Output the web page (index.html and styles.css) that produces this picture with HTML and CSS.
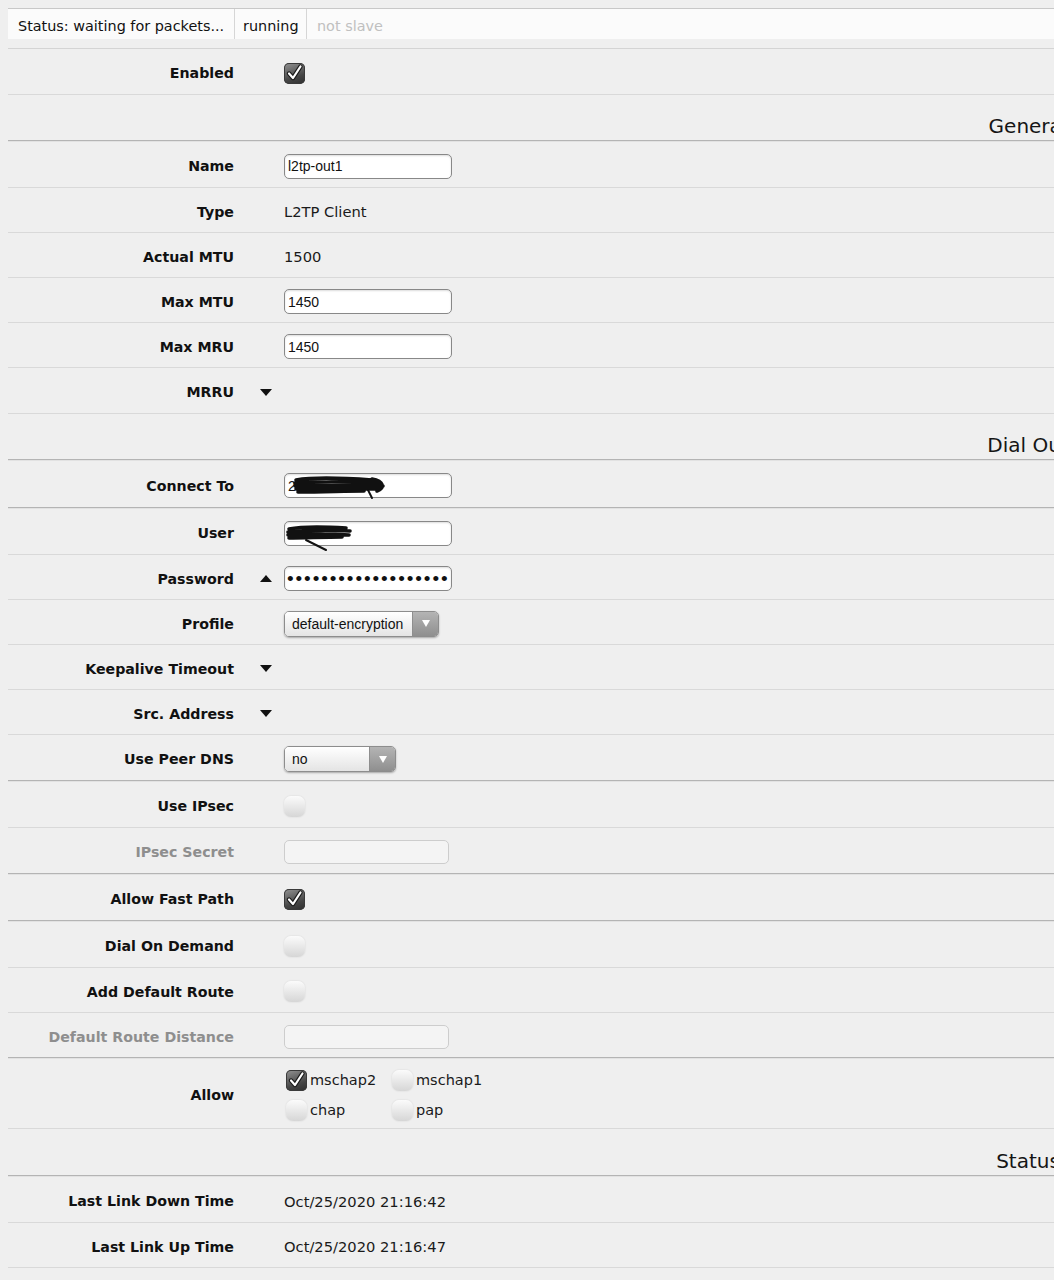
FILE: index.html
```html
<!DOCTYPE html>
<html>
<head>
<meta charset="utf-8">
<title>Interface l2tp-out1</title>
<link rel="stylesheet" href="styles.css">
</head>
<body>
<div class="page">
  <div class="statusbar">
    <div class="cell c1">Status: waiting for packets...</div>
    <div class="cell c2">running</div>
    <div class="cell off">not slave</div>
  </div>

  <div class="form">
    <div class="row t"><div class="lbl">Enabled</div><div class="mid"></div><div class="val"><span class="cb on"><svg viewBox="0 0 21 21" width="21" height="21"><path class="ck-o" d="M5 10.5 L9 15 L16.5 3.5"/><path class="ck-i" d="M5 10.5 L9 15 L16.5 3.5"/></svg></span></div></div>

    <div class="hdr grp"><span>General</span></div>

    <div class="row t"><div class="lbl">Name</div><div class="mid"></div><div class="val"><input class="inp" type="text" value="l2tp-out1"></div></div>
    <div class="row"><div class="lbl">Type</div><div class="mid"></div><div class="val">L2TP Client</div></div>
    <div class="row"><div class="lbl">Actual MTU</div><div class="mid"></div><div class="val">1500</div></div>
    <div class="row"><div class="lbl">Max MTU</div><div class="mid"></div><div class="val"><input class="inp" type="text" value="1450"></div></div>
    <div class="row"><div class="lbl">Max MRU</div><div class="mid"></div><div class="val"><input class="inp" type="text" value="1450"></div></div>
    <div class="row t"><div class="lbl">MRRU</div><div class="mid"><span class="tri-down"></span></div><div class="val"></div></div>

    <div class="hdr grp"><span>Dial Out</span></div>

    <div class="row t2 grp"><div class="lbl">Connect To</div><div class="mid"></div><div class="val"><div class="iw"><input class="inp" type="text" value="2"><svg class="scrib" width="120" height="32" viewBox="0 0 120 32"><path d="M12 7 C30 4 60 5 88 7 M11 10 C40 8 70 9 96 10 M11 13 C40 12 70 13 99 13 M12 16 C40 16 70 15 96 16 M14 19 C40 19 60 18 80 18 M88 6 C100 8 101 15 93 18"/><path class="thin" d="M84 17 L88 25"/></svg></div></div></div>
    <div class="row t"><div class="lbl">User</div><div class="mid"></div><div class="val"><div class="iw"><input class="inp" type="text" value=""><svg class="scrib" width="120" height="34" viewBox="0 0 120 34"><path d="M5 8 C20 5 45 6 62 7 M4 11 C25 9 50 9 66 10 M4 14 C25 13 50 13 65 14 M5 17 C20 17 40 16 58 16"/><path class="thin" d="M22 19 L42 29"/></svg></div></div></div>
    <div class="row"><div class="lbl">Password</div><div class="mid"><span class="tri-up"></span></div><div class="val"><input class="inp pw" type="password" value="xxxxxxxxxxxxxxxxxxx"></div></div>
    <div class="row"><div class="lbl">Profile</div><div class="mid"></div><div class="val"><div class="sel sel-profile"><span class="st">default-encryption</span><span class="sa"><i></i></span></div></div></div>
    <div class="row"><div class="lbl">Keepalive Timeout</div><div class="mid"><span class="tri-down"></span></div><div class="val"></div></div>
    <div class="row"><div class="lbl">Src. Address</div><div class="mid"><span class="tri-down"></span></div><div class="val"></div></div>
    <div class="row t grp"><div class="lbl">Use Peer DNS</div><div class="mid"></div><div class="val"><div class="sel sel-dns"><span class="st">no</span><span class="sa"><i></i></span></div></div></div>

    <div class="row t"><div class="lbl">Use IPsec</div><div class="mid"></div><div class="val"><span class="cb"></span></div></div>
    <div class="row t grp"><div class="lbl dis">IPsec Secret</div><div class="mid"></div><div class="val"><input class="inp inp-dis" type="text" value="" disabled></div></div>

    <div class="row t grp"><div class="lbl">Allow Fast Path</div><div class="mid"></div><div class="val"><span class="cb on"><svg viewBox="0 0 21 21" width="21" height="21"><path class="ck-o" d="M5 10.5 L9 15 L16.5 3.5"/><path class="ck-i" d="M5 10.5 L9 15 L16.5 3.5"/></svg></span></div></div>

    <div class="row t"><div class="lbl">Dial On Demand</div><div class="mid"></div><div class="val"><span class="cb"></span></div></div>
    <div class="row"><div class="lbl">Add Default Route</div><div class="mid"></div><div class="val"><span class="cb"></span></div></div>
    <div class="row grp"><div class="lbl dis">Default Route Distance</div><div class="mid"></div><div class="val"><input class="inp inp-dis" type="text" value="" disabled></div></div>

    <div class="row allow-row"><div class="lbl">Allow</div><div class="mid"></div>
      <div class="val">
        <div class="allow">
          <div class="opt"><span class="cb on"><svg viewBox="0 0 21 21" width="21" height="21"><path class="ck-o" d="M5 10.5 L9 15 L16.5 3.5"/><path class="ck-i" d="M5 10.5 L9 15 L16.5 3.5"/></svg></span><span>mschap2</span></div>
          <div class="opt"><span class="cb"></span><span>mschap1</span></div>
          <div class="opt"><span class="cb"></span><span>chap</span></div>
          <div class="opt"><span class="cb"></span><span>pap</span></div>
        </div>
      </div>
    </div>

    <div class="hdr hdr-st grp"><span>Status</span></div>

    <div class="row t"><div class="lbl">Last Link Down Time</div><div class="mid"></div><div class="val">Oct/25/2020 21:16:42</div></div>
    <div class="row"><div class="lbl">Last Link Up Time</div><div class="mid"></div><div class="val">Oct/25/2020 21:16:47</div></div>
  </div>
</div>
</body>
</html>
```
FILE: styles.css
```css
* { box-sizing: border-box; }
html, body {
  margin: 0;
  padding: 0;
  background: #efefef;
  overflow: hidden;
}
body {
  width: 1054px;
  height: 1280px;
  font-family: "DejaVu Sans", Verdana, sans-serif;
  color: #111;
}
.page {
  width: 2040px;
  margin-left: 8px;
  padding-top: 8px;
}

/* status bar */
.statusbar {
  display: flex;
  height: 31px;
  border-top: 1px solid #c8c8c8;
  background: #fbfbfb;
  margin-bottom: 9px;
  font-size: 14.4px;
}
.cell {
  line-height: 30px;
  padding-top: 2px;
  padding-left: 10px;
  border-right: 1px solid #d6d6d6;
  white-space: nowrap;
  color: #111;
}
.c1 { width: 227px; }
.c2 { width: 72px; padding-left: 8px; }
.cell.off { border-right: none; color: #c0c0c0; flex: 1; }

/* form rows */
.form { border-top: 1px solid #d4d4d4; }
.row {
  display: flex;
  align-items: center;
  height: 45px;
  padding-top: 3px;
  border-bottom: 1px solid #d9d9d9;
}
.row.t { height: 46px; }
.row.t2 { height: 47px; }
.grp {
  border-bottom: 1px solid #b4b4b4 !important;
  box-shadow: 0 1px 0 #e2e2e2;
  margin-bottom: 1px;
}
.lbl {
  width: 226px;
  flex: none;
  text-align: right;
  font-weight: bold;
  font-size: 14.2px;
  color: #111;
  white-space: nowrap;
}
.lbl.dis { color: #8e8e8e; }
.mid {
  width: 50px;
  flex: none;
  padding-left: 26px;
  display: flex;
  align-items: center;
}
.val {
  font-size: 14.7px;
  color: #1a1a1a;
  display: flex;
  align-items: center;
}

/* section headers */
.hdr {
  height: 46px;
  display: flex;
  align-items: flex-end;
  justify-content: center;
  font-size: 20px;
  line-height: 24px;
  padding-bottom: 2px;
  color: #151515;
}
.hdr-st { height: 47px; }

/* triangles */
.tri-down {
  width: 0;
  height: 0;
  border-left: 6px solid transparent;
  border-right: 6px solid transparent;
  border-top: 7px solid #111;
}
.tri-up {
  width: 0;
  height: 0;
  border-left: 6px solid transparent;
  border-right: 6px solid transparent;
  border-bottom: 7px solid #111;
}

/* inputs */
.inp {
  width: 168px;
  height: 25px;
  margin: 0;
  border: 1px solid #888;
  border-radius: 5px;
  background: #fff;
  box-shadow: inset 0 1px 2px rgba(0,0,0,0.14);
  padding: 0 3px;
  font-family: "Liberation Sans", Arial, sans-serif;
  font-size: 14px;
  color: #111;
  outline: none;
}
.inp.pw {
  font-size: 19px;
  letter-spacing: 1.9px;
  padding-left: 2px;
}
.inp-dis {
  width: 165px;
  height: 24px;
  border-color: #cdcdcd;
  background: #f4f4f4;
  box-shadow: none;
}
.iw { position: relative; }
.scrib {
  position: absolute;
  left: 0;
  top: 0;
  overflow: visible;
  pointer-events: none;
}
.scrib path {
  fill: none;
  stroke: #111;
  stroke-width: 3.6;
  stroke-linecap: round;
}
.scrib path.thin { stroke-width: 2; }

/* selects */
.sel {
  display: flex;
  height: 26px;
  border: 1px solid #8d8d8d;
  border-radius: 5px;
  overflow: hidden;
  box-shadow: 0 1px 2px rgba(0,0,0,0.3);
  font-family: "Liberation Sans", Arial, sans-serif;
  font-size: 14px;
  color: #111;
}
.sel-profile { width: 155px; }
.sel-dns { width: 112px; }
.st {
  flex: 1;
  padding-left: 7px;
  line-height: 25px;
  background: linear-gradient(#ffffff, #e4e4e4);
  white-space: nowrap;
}
.sa {
  width: 26px;
  flex: none;
  border-left: 1px solid #8e8e8e;
  background: linear-gradient(#b4b4b4, #8f8f8f);
  display: flex;
  align-items: center;
  justify-content: center;
}
.sa i {
  width: 0;
  height: 0;
  border-left: 4.5px solid transparent;
  border-right: 4.5px solid transparent;
  border-top: 7px solid #fff;
}

/* checkboxes */
.cb {
  display: inline-block;
  width: 21px;
  height: 21px;
  border-radius: 7px;
  background: linear-gradient(#fbfbfb, #d6d6d6);
  box-shadow: 0 0 2px rgba(0,0,0,0.12);
  position: relative;
  flex: none;
}
.cb.on {
  background: linear-gradient(160deg, #959595, #454545 65%, #2e2e2e);
  box-shadow: inset 0 0 0 1px #3a3a3a;
  border-radius: 5px;
}
.cb svg {
  position: absolute;
  left: 0;
  top: 0;
  overflow: visible;
}
.ck-o {
  fill: none;
  stroke: #1c1c1c;
  stroke-width: 4.4;
  stroke-linecap: round;
  stroke-linejoin: round;
}
.ck-i {
  fill: none;
  stroke: #fff;
  stroke-width: 2.2;
  stroke-linecap: round;
  stroke-linejoin: round;
}

/* allow options */
.allow-row { height: 70px; }
.allow {
  display: grid;
  grid-template-columns: 106px 106px;
  row-gap: 9px;
  padding-left: 2px;
}
.opt {
  display: flex;
  align-items: center;
  gap: 3px;
  height: 21px;
  font-size: 14.5px;
}
```
